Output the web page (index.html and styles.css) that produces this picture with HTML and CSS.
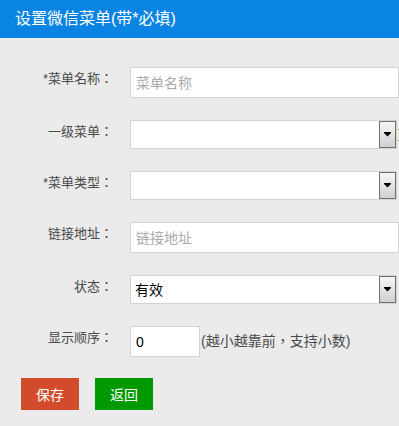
FILE: index.html
```html
<!DOCTYPE html>
<html lang="zh-CN">
<head>
  <meta charset="UTF-8">
  <meta name="viewport" content="width=device-width, initial-scale=1.0">
  <link rel="stylesheet" href="styles.css">
  <title>设置微信菜单</title>
</head>
<body>
  <div class="header">设置微信菜单(带*必填)</div>

  <form class="menu-form">
    <div class="row">
      <label class="label">*菜单名称：</label>
      <input class="field wide" type="text" placeholder="菜单名称">
    </div>
    <div class="row">
      <label class="label">一级菜单：</label>
      <span class="select-wrap">
        <select class="field sel"><option></option></select>
        <span class="sel-btn"><svg width="9" height="5" viewBox="0 0 9 5"><rect x="1" y="0" width="7" height="1" fill="#000"/><polygon points="1,1 8,1 4.5,4.5" fill="#000"/></svg></span>
      </span>
      <span class="note"></span>
    </div>
    <div class="row">
      <label class="label">*菜单类型：</label>
      <span class="select-wrap">
        <select class="field sel"><option></option></select>
        <span class="sel-btn"><svg width="9" height="5" viewBox="0 0 9 5"><rect x="1" y="0" width="7" height="1" fill="#000"/><polygon points="1,1 8,1 4.5,4.5" fill="#000"/></svg></span>
      </span>
    </div>
    <div class="row">
      <label class="label">链接地址：</label>
      <input class="field wide" type="text" placeholder="链接地址">
    </div>
    <div class="row">
      <label class="label">状态：</label>
      <span class="select-wrap">
        <select class="field sel"><option>有效</option><option>无效</option></select>
        <span class="sel-btn"><svg width="9" height="5" viewBox="0 0 9 5"><rect x="1" y="0" width="7" height="1" fill="#000"/><polygon points="1,1 8,1 4.5,4.5" fill="#000"/></svg></span>
      </span>
    </div>
    <div class="row">
      <label class="label">显示顺序：</label>
      <input class="field small" type="text" value="0">
      <span class="hint">(越小越靠前，支持小数)</span>
    </div>
    <div class="buttons">
      <button type="button" class="btn save">保存</button>
      <button type="button" class="btn back">返回</button>
    </div>
  </form>
</body>
</html>
```

FILE: styles.css
```css
html, body {
  margin: 0;
  padding: 0;
  overflow: hidden;
}

body {
  background: #ebebeb;
  font-family: "Microsoft YaHei", "Liberation Sans", "Noto Sans CJK JP", sans-serif;
  color: #555;
}

.header {
  height: 38px;
  line-height: 38px;
  background: #0a84e3;
  color: #fff;
  font-size: 16px;
  padding-left: 15px;
}

.menu-form {
  padding-top: 29px;
}

.row {
  display: flex;
  align-items: flex-start;
  white-space: nowrap;
  margin-bottom: 22px;
}

/* centred full-width colon / comma like YaHei */
.label,
.hint {
  font-feature-settings: "locl" 0;
}

.label {
  width: 113px;
  flex: none;
  text-align: right;
  font-size: 13px;
  line-height: 24px;
  color: #4a4a4a;
  margin-right: 17px;
}

.field {
  box-sizing: border-box;
  border: 1px solid #d3d3d3;
  background: #fff;
  font-family: inherit;
  font-size: 14px;
  color: #000;
  margin: 0;
  outline: none;
}

input.field {
  height: 31px;
  padding: 0 5px;
}

input.field::placeholder {
  color: #aaa;
}

.wide {
  width: 269px;
  flex: none;
}

.small {
  width: 70px;
  flex: none;
}

.select-wrap {
  position: relative;
  display: block;
  flex: none;
  width: 267px;
  height: 29px;
}

.sel {
  appearance: none;
  -webkit-appearance: none;
  width: 267px;
  height: 29px;
  padding: 0 4px;
  border-radius: 0;
}

.sel-btn {
  position: absolute;
  top: 1px;
  right: 1px;
  width: 17px;
  height: 27px;
  box-sizing: border-box;
  border: 1px solid #707070;
  background: linear-gradient(#f6f6f6, #e6e6e6 45%, #cfcfcf);
  display: flex;
  align-items: center;
  justify-content: center;
  pointer-events: none;
}

.sel-btn svg {
  display: block;
  margin-top: -1px;
}

/* cut-off orange marker right of the first select */
.note {
  display: block;
  flex: none;
  width: 3px;
  height: 10px;
  margin: 9px 0 0 1px;
  border-top: 1px solid #e07a2a;
  border-bottom: 1px solid #e07a2a;
}

.hint {
  font-family: "Liberation Sans", "Noto Sans CJK TC", sans-serif;
  font-size: 14px;
  line-height: 31px;
  color: #4a4a4a;
  margin-left: 1px;
}

.buttons {
  display: flex;
  gap: 16px;
  padding-left: 21px;
  margin-top: -1px;
}

.btn {
  width: 58px;
  height: 32px;
  border: 0;
  padding: 0;
  color: #fff;
  font-family: inherit;
  font-size: 14px;
  cursor: pointer;
}

.save {
  background: #d24c2c;
}

.back {
  background: #009900;
}
```
